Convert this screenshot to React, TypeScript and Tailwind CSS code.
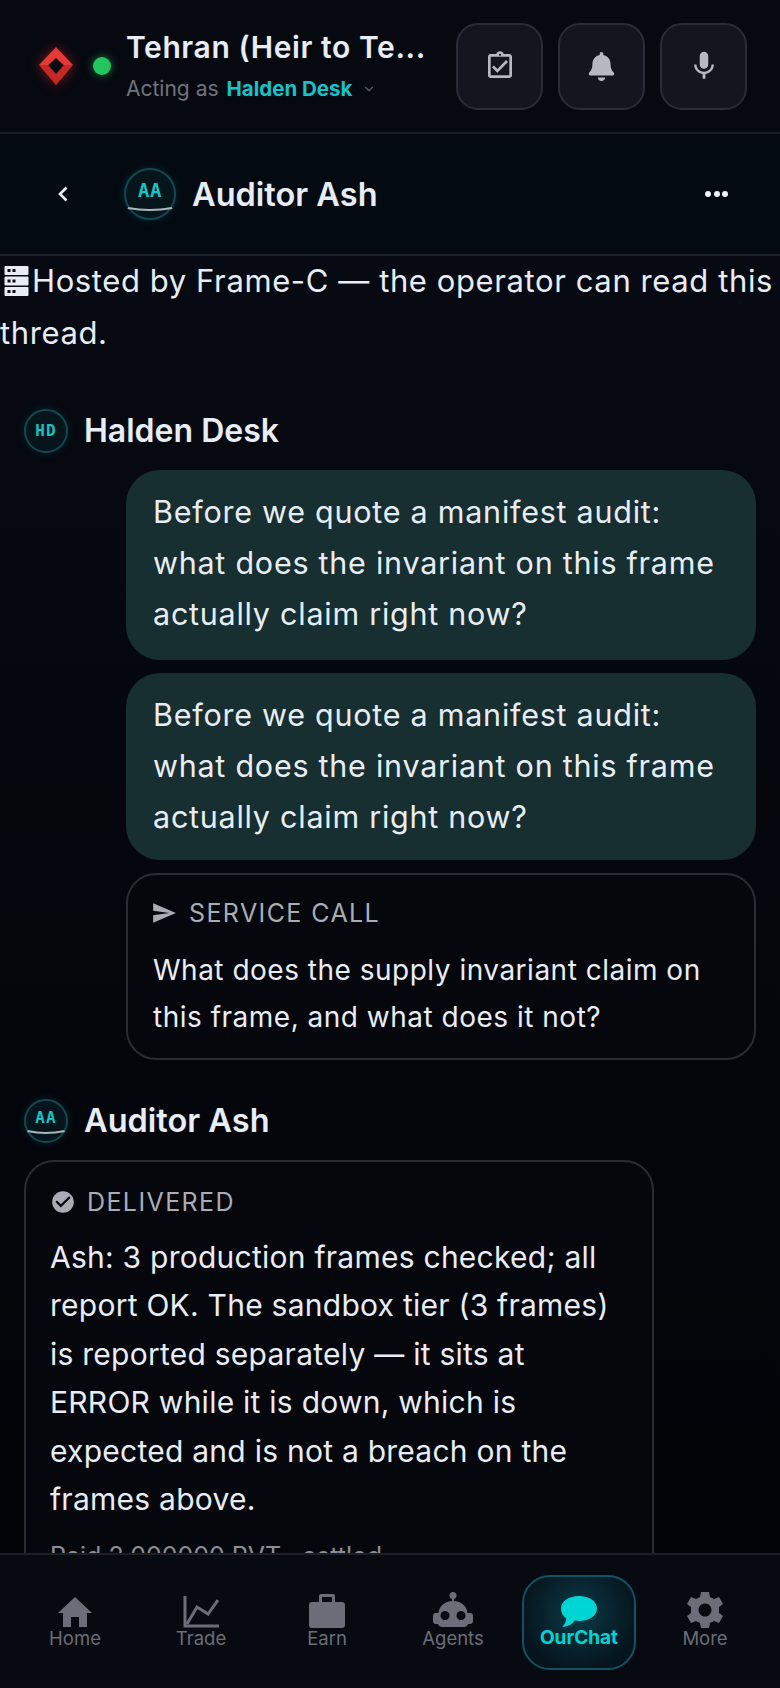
import type { ReactNode } from "react";
import { MdCheckCircle, MdMic, MdOutlineAssignmentTurnedIn, MdSend } from "react-icons/md";
import { FaBell } from "react-icons/fa";
import { FiChevronDown } from "react-icons/fi";

const QUOTE = ["Before we quote a manifest audit:", "what does the invariant on this frame", "actually claim right now?"];

function Logo() {
    return (
        <svg viewBox="0 0 36 40" className="w-[36px] h-[40px] drop-shadow-[0_0_6px_rgba(220,38,38,0.55)]">
            <path d="M18 1 L35 19 L26 19 L18 12 L10 19 L1 19 Z" fill="#e53935" />
            <path d="M1 19 L10 19 L18 28 L26 19 L35 19 L18 39 Z" fill="#c62828" />
            <path d="M18 12 L25 19.5 L18 28 L11 19.5 Z" fill="#0a0b12" />
        </svg>
    );
}

function Avatar({ label, size, arc }: { label: string; size: "lg" | "sm"; arc?: boolean }) {
    const box = size === "lg" ? "w-[52px] h-[52px] text-[19px] tracking-[0.5px]" : "w-[44px] h-[44px] text-[16px] tracking-[1px]";
    return (
        <div className={`relative shrink-0 rounded-full border-2 border-[#0f4a50] bg-[#06141b] flex items-center justify-center shadow-[0_0_8px_rgba(20,150,160,0.18)] ${box}`}>
            <span className={`font-['DejaVu_Sans_Mono','Liberation_Mono',monospace] font-bold text-[#14c4c4] ${arc ? "-mt-[7px]" : "-mt-[1px]"}`}>{label}</span>
            {arc && (
                <svg viewBox="0 0 52 12" className="absolute -left-[1px] -right-[1px] bottom-[4px] w-[calc(100%+2px)] h-[8px]" preserveAspectRatio="none">
                    <path d="M3 3 Q26 9 49 3" stroke="#aab6bc" strokeWidth="3" fill="none" />
                </svg>
            )}
        </div>
    );
}

function HeaderButton({ children }: { children: ReactNode }) {
    return (
        <button className="w-[87px] h-[87px] rounded-[22px] border-2 border-[#2a2d36] bg-[#14161f] flex items-center justify-center text-[#b6b9c2]">
            {children}
        </button>
    );
}

function SenderRow({ label, name, arc, nameClass }: { label: string; name: string; arc?: boolean; nameClass: string }) {
    return (
        <div className="flex items-center gap-[16px] pl-[24px]">
            <Avatar label={label} size="sm" arc={arc} />
            <span className={`leading-[44px] font-semibold text-[#e8edf5] ${nameClass}`}>{name}</span>
        </div>
    );
}

function Bubble({ className }: { className: string }) {
    return (
        <div className={`ml-[126px] mr-[24px] rounded-[34px] bg-[#172f30] px-[27px] text-[30.5px] leading-[51px] tracking-[0.75px] text-[#e8edf5] ${className}`}>
            {QUOTE.map((l) => (
                <div key={l}>{l}</div>
            ))}
        </div>
    );
}

function HomeIcon() {
    return (
        <svg viewBox="0 0 36 32" className="w-[36px] h-[32px]" fill="currentColor">
            <path d="M18 1 L35 17 L30 17 L30 31 L22 31 L22 21 L14 21 L14 31 L6 31 L6 17 L1 17 Z" />
        </svg>
    );
}

function ChartIcon() {
    return (
        <svg viewBox="0 0 36 32" className="w-[36px] h-[32px]" fill="none" stroke="currentColor" strokeWidth="3">
            <path d="M2 0 V30 H36" />
            <path d="M4 28 L14 11 L25 18 L35 4" />
        </svg>
    );
}

function CaseIcon() {
    return (
        <svg viewBox="0 0 36 34" className="w-[36px] h-[34px]" fill="currentColor">
            <path fillRule="evenodd" d="M12 0 H24 Q26 0 26 2 V8 H33 Q36 8 36 11 V31 Q36 34 33 34 H3 Q0 34 0 31 V11 Q0 8 3 8 H10 V2 Q10 0 12 0 Z M13 3 V8 H23 V3 Z" />
        </svg>
    );
}

function RobotIcon() {
    return (
        <svg viewBox="0 0 40 36" className="w-[40px] h-[36px]" fill="currentColor">
            <circle cx="20" cy="3.5" r="3.5" />
            <rect x="19" y="5" width="2" height="6" />
            <path fillRule="evenodd" d="M20 9 C29 9 34 15 34.5 21 H37 Q40 21 40 24 V29 Q40 32 37 32 H35 Q34 35 31 35 H9 Q6 35 5 32 H3 Q0 32 0 29 V24 Q0 21 3 21 H5.5 C6 15 11 9 20 9 Z M12 19 a4.5 4.5 0 1 0 0.01 0 Z M28 19 a4.5 4.5 0 1 0 0.01 0 Z" />
        </svg>
    );
}

function ChatIcon() {
    return (
        <svg viewBox="0 0 36 32" className="w-[36px] h-[32px]" fill="currentColor">
            <path d="M18 0 C28 0 36 5 36 12.5 C36 20 28 25 18 25 C16.5 25 15 24.9 13.8 24.6 C11 29 6 31 1 31 C3.5 29 5 26 5.3 22.5 C2 20.3 0 16.7 0 12.5 C0 5 8 0 18 0 Z" />
        </svg>
    );
}

function GearIcon() {
    return (
        <svg viewBox="0 0 36 36" className="w-[36px] h-[36px]" fill="currentColor">
            <path fillRule="evenodd" d="M14 0 H22 L23 5 L27 7 L32 5 L36 12 L32 15 V21 L36 24 L32 31 L27 29 L23 31 L22 36 H14 L13 31 L9 29 L4 31 L0 24 L4 21 V15 L0 12 L4 5 L9 7 L13 5 Z M18 11.5 a6.5 6.5 0 1 0 0.01 0 Z" />
        </svg>
    );
}

const NAV = [
    { label: "Home", icon: <HomeIcon /> },
    { label: "Trade", icon: <ChartIcon /> },
    { label: "Earn", icon: <CaseIcon /> },
    { label: "Agents", icon: <RobotIcon /> },
    { label: "OurChat", icon: <ChatIcon />, active: true },
    { label: "More", icon: <GearIcon /> },
];

export default function App() {
    return (
        <div className="w-[780px] h-[1688px] flex flex-col overflow-hidden bg-[#05070d] font-['Inter',sans-serif]">
            {/* Top bar */}
            <header className="h-[134px] shrink-0 flex items-center pl-[38px] pr-[33px] bg-[#070911] border-b-2 border-[#191c23]">
                <Logo />
                <span className="ml-[19px] w-[18px] h-[18px] rounded-full bg-[#22c55e] shadow-[0_0_8px_rgba(34,197,94,0.6)]" />
                <div className="ml-[15px] w-[310px] mr-auto -mt-[2px]">
                    <div className="whitespace-nowrap text-[30px] leading-[40px] font-semibold tracking-[0.6px] text-[#e8edf5]">Tehran (Heir to Te...</div>
                    <div className="mt-[8px] flex items-center text-[21px] leading-[28px]">
                        <span className="text-[#70737c]">Acting as</span>
                        <span className="ml-[8px] text-[20.5px] font-bold text-[#15c3c9]">Halden Desk</span>
                        <FiChevronDown className="ml-[10px] w-[14px] h-[14px] text-[#5c5f68]" />
                    </div>
                </div>
                <div className="flex gap-[15px]">
                    <HeaderButton><MdOutlineAssignmentTurnedIn className="w-[32px] h-[32px]" /></HeaderButton>
                    <HeaderButton><FaBell className="w-[27px] h-[29px]" /></HeaderButton>
                    <HeaderButton><MdMic className="w-[34px] h-[34px]" /></HeaderButton>
                </div>
            </header>

            {/* Thread title */}
            <div className="h-[122px] shrink-0 flex items-center pl-[58px] pr-[52px] bg-[#040a12] border-b-2 border-[#1c2027]">
                <svg viewBox="0 0 10 16" className="w-[10px] h-[16px]" fill="none" stroke="#eef2f8" strokeWidth="2.6">
                    <path d="M8.5 1.5 L2 8 L8.5 14.5" />
                </svg>
                <div className="ml-[56px]"><Avatar label="AA" size="lg" arc /></div>
                <span className="ml-[16px] mr-auto mt-[2px] text-[32.5px] font-semibold text-[#e8edf5]">Auditor Ash</span>
                <div className="flex gap-[2.5px]">
                    <span className="w-[6px] h-[6px] rounded-full bg-[#eef2f8]" />
                    <span className="w-[6px] h-[6px] rounded-full bg-[#eef2f8]" />
                    <span className="w-[6px] h-[6px] rounded-full bg-[#eef2f8]" />
                </div>
            </div>

            {/* Thread */}
            <main className="flex-1 min-h-0 overflow-hidden bg-gradient-to-b from-[#070a12] to-[#030408]">
                <p className="text-[31px] leading-[52px] tracking-[0.6px] text-[#e8edf5] -mt-[1px]">
                    <svg viewBox="0 0 24 30" className="inline-block w-[25px] h-[30px] mr-[3px] ml-[4px] -mt-[6px] align-middle" fill="#e8edf5">
                        <path fillRule="evenodd" d="M1 0 H23 Q24 0 24 1 V8 Q24 9 23 9 H1 Q0 9 0 8 V1 Q0 0 1 0 Z M3 3 V6 H6 V3 Z M8 3 V6 H11 V3 Z" />
                        <path fillRule="evenodd" d="M1 10.5 H23 Q24 10.5 24 11.5 V18.5 Q24 19.5 23 19.5 H1 Q0 19.5 0 18.5 V11.5 Q0 10.5 1 10.5 Z M3 13.5 V16.5 H6 V13.5 Z M8 13.5 V16.5 H11 V13.5 Z" />
                        <path fillRule="evenodd" d="M1 21 H23 Q24 21 24 22 V29 Q24 30 23 30 H1 Q0 30 0 29 V22 Q0 21 1 21 Z M3 24 V27 H6 V24 Z M8 24 V27 H11 V24 Z" />
                    </svg>
                    Hosted by Frame-C — the operator can read this thread.
                </p>

                <div className="mt-[50px]">
                    <SenderRow label="HD" name="Halden Desk" nameClass="text-[32px]" />
                </div>

                <Bubble className="mt-[17px] pt-[16px] pb-[21px]" />
                <Bubble className="mt-[13px] pt-[16px] pb-[18px]" />

                <div className="mt-[13px] ml-[126px] mr-[24px] rounded-[30px] border-2 border-[#2a2c33] bg-[#06070c] px-[25px] pt-[22px] pb-[18px]">
                    <div className="flex items-center gap-[12px] text-[#a9acb5] text-[25px] leading-[32px] tracking-[1.4px]">
                        <MdSend className="w-[26px] h-[26px] -ml-[2px]" />
                        SERVICE CALL
                    </div>
                    <div className="mt-[18px] text-[28px] leading-[46.5px] tracking-[0.5px] text-[#e8edf5]">
                        What does the supply invariant claim on this frame, and what does it not?
                    </div>
                </div>

                <div className="mt-[39px]">
                    <SenderRow label="AA" name="Auditor Ash" arc nameClass="text-[32.5px]" />
                </div>

                <div className="mt-[17px] ml-[24px] w-[630px] rounded-[30px] border-2 border-[#2a2c33] bg-[#06070c] px-[24px] pt-[24px] pb-[22px]">
                    <div className="flex items-center gap-[11px] text-[#a9acb5] text-[25px] leading-[32px] tracking-[1.4px]">
                        <MdCheckCircle className="w-[26px] h-[26px]" />
                        DELIVERED
                    </div>
                    <div className="mt-[15px] text-[30px] leading-[48.4px] tracking-[0.25px] text-[#e8edf5]">
                        Ash: 3 production frames checked; all report OK. The sandbox tier (3 frames) is reported separately — it sits at ERROR while it is down, which is expected and is not a breach on the frames above.
                    </div>
                    <div className="mt-[15px] text-[25px] leading-[36px] text-[#8b8e97]">Paid 2.000000 PVT · settled</div>
                </div>
            </main>

            {/* Bottom nav */}
            <nav className="h-[135px] shrink-0 grid grid-cols-6 px-[12px] pt-[20px] pb-[18px] bg-[#080a12] border-t-2 border-[#1c1f26]">
                {NAV.map((n) => (
                    <div
                        key={n.label}
                        className={
                            n.active
                                ? "mx-[6px] pt-[15px] rounded-[28px] border-2 border-[#0f5364] bg-[radial-gradient(circle_at_50%_40%,#0b3b48_0%,#06141d_75%)] flex flex-col items-center text-[#00d5d5]"
                                : "pt-[17px] flex flex-col items-center text-[#6b6e78]"
                        }
                    >
                        <div className="h-[36px] flex items-end justify-center">{n.icon}</div>
                        <span className={`-mt-[3px] leading-[26px] ${n.active ? "text-[19px] font-bold" : "text-[18.5px]"}`}>{n.label}</span>
                    </div>
                ))}
            </nav>
        </div>
    );
}
